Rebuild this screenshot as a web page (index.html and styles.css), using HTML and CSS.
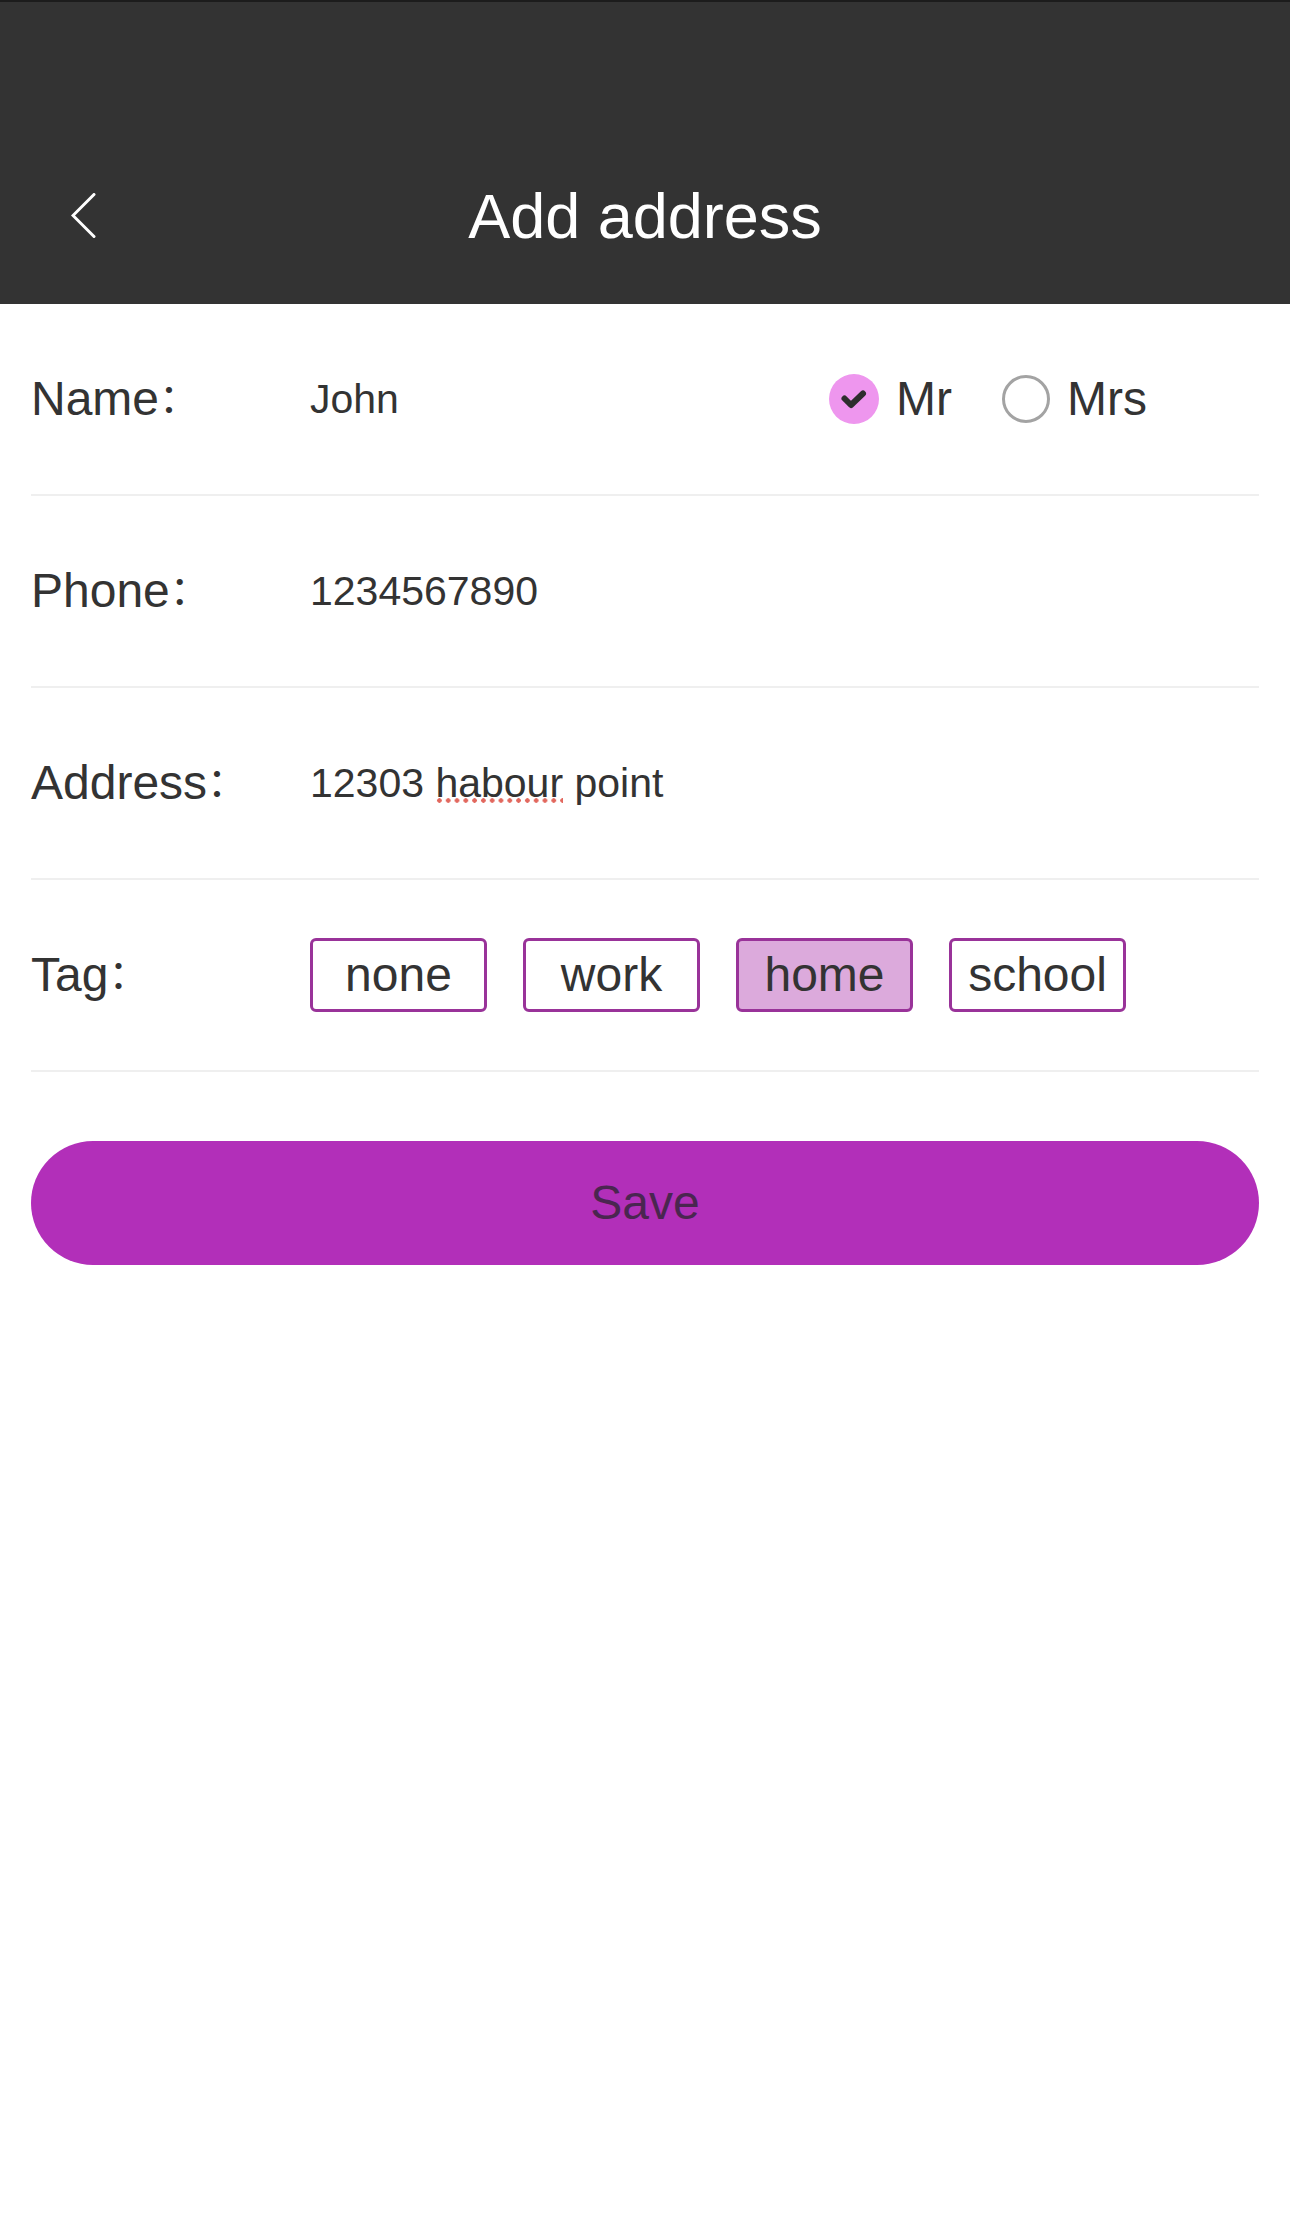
FILE: index.html
```html
<!DOCTYPE html>
<html lang="en">
<head>
<meta charset="utf-8">
<title>Add address</title>
<link rel="stylesheet" href="styles.css">
</head>
<body>
<header class="header">
  <div class="navbar">
    <div class="nav-left">
      <svg class="back-icon" width="26" height="46" viewBox="0 0 26 46" aria-hidden="true">
        <polyline points="23,1.5 2,22.5 23,43.5" fill="none" stroke="#ffffff" stroke-width="3" stroke-linecap="round" stroke-linejoin="miter"/>
      </svg>
    </div>
    <h1 class="title">Add address</h1>
    <div class="nav-right"></div>
  </div>
</header>

<main class="form">
  <div class="row">
    <div class="label">Name<span class="colon">：</span></div>
    <div class="value">John</div>
    <div class="gender">
      <span class="radio radio-checked">
        <svg width="50" height="50" viewBox="0 0 50 50" aria-hidden="true">
          <polyline points="15.5,24.5 22,31 34,19.5" fill="none" stroke="#2d2d2d" stroke-width="6" stroke-linecap="round" stroke-linejoin="round"/>
        </svg>
      </span>
      <span class="radio-text">Mr</span>
      <span class="radio radio-empty"></span>
      <span class="radio-text">Mrs</span>
    </div>
  </div>

  <div class="row">
    <div class="label">Phone<span class="colon">：</span></div>
    <div class="value">1234567890</div>
  </div>

  <div class="row">
    <div class="label">Address<span class="colon">：</span></div>
    <div class="value">12303 <span class="spell">habour</span> point</div>
  </div>

  <div class="row">
    <div class="label">Tag<span class="colon">：</span></div>
    <div class="tags">
      <span class="tag">none</span>
      <span class="tag">work</span>
      <span class="tag tag-active">home</span>
      <span class="tag">school</span>
    </div>
  </div>

  <button class="save" type="button">Save</button>
</main>
</body>
</html>
```

FILE: styles.css
```css
* {
  box-sizing: border-box;
}

html, body {
  margin: 0;
  padding: 0;
  background: #ffffff;
}

body {
  width: 1290px;
  min-height: 2227px;
  font-family: "Liberation Sans", Arial, "Noto Sans CJK SC", sans-serif;
  color: #333333;
}

.header {
  height: 304px;
  background: #333333;
  border-top: 2px solid #1c1c1c;
  padding-top: 126px;
}

.navbar {
  height: 176px;
  display: grid;
  grid-template-columns: 1fr auto 1fr;
  align-items: center;
}

.nav-left {
  padding-left: 71px;
  display: flex;
  align-items: center;
}

.back-icon {
  display: block;
}

.title {
  margin: 0;
  font-size: 63px;
  font-weight: normal;
  line-height: 1;
  color: #ffffff;
}

.form {
  padding: 0 31px;
}

.row {
  height: 192px;
  border-bottom: 2px solid #efefef;
  display: flex;
  align-items: center;
}

.label {
  width: 279px;
  flex: none;
  font-size: 48px;
  line-height: 1;
  color: #333333;
  white-space: nowrap;
}

.colon {
  font-family: "Noto Sans CJK SC", sans-serif;
  font-size: 40px;
  margin-left: 0;
  vertical-align: 3px;
}

.value {
  flex: 1;
  font-size: 41px;
  line-height: 1;
  color: #333333;
  white-space: nowrap;
}

.spell {
  background-image: radial-gradient(circle, #e2685e 2px, rgba(226, 104, 94, 0) 2.5px);
  background-size: 8.8px 5px;
  background-repeat: repeat-x;
  background-position: 0 calc(100% - 3px);
}

.gender {
  display: flex;
  align-items: center;
  padding-right: 112px;
}

.radio {
  width: 50px;
  height: 50px;
  border-radius: 50%;
  flex: none;
  display: flex;
  align-items: center;
  justify-content: center;
}

.radio-checked {
  background: #ee96ee;
}

.radio-empty {
  width: 48px;
  height: 48px;
  border: 3px solid #a3a3a3;
  margin-left: 50px;
}

.radio-text {
  font-size: 48px;
  line-height: 1;
  color: #333333;
  margin-left: 17px;
}

.tags {
  display: flex;
  gap: 36px;
}

.tag {
  width: 177px;
  height: 74px;
  border: 3px solid #993399;
  border-radius: 6px;
  display: flex;
  align-items: center;
  justify-content: center;
  font-size: 48px;
  line-height: 1;
  color: #333333;
}

.tag-active {
  background: #dcaadc;
}

.save {
  display: flex;
  align-items: center;
  justify-content: center;
  width: 100%;
  height: 124px;
  margin-top: 69px;
  border: none;
  border-radius: 62px;
  background: #b22fb9;
  font-family: "Liberation Sans", Arial, sans-serif;
  font-size: 48px;
  line-height: 1;
  color: #4a2650;
  padding: 0;
}
```
